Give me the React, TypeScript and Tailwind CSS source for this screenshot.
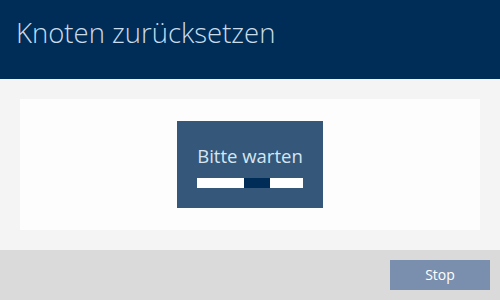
export default function App() {
  return (
    <div className="w-[500px] h-[300px] flex flex-col bg-[#f4f4f4]" style={{ fontFamily: '"Open Sans", "Noto Sans", sans-serif' }}>
      <div className="h-[79px] bg-[#002d57] px-4 pt-[13px]">
        <h1 className="text-[27.5px] font-light text-[#c9dcec] leading-[40px]">Knoten zurücksetzen</h1>
      </div>
      <div className="flex-1 px-5 pt-5 pb-5">
        <div className="h-[131px] bg-[#fdfdfd] flex justify-center pt-[22px]">
          <div className="w-[146px] h-[87px] bg-[#34577a] flex flex-col items-center pt-[24px]">
            <span className="text-[18.5px] leading-[22px] text-[#d6e6f2]">Bitte warten</span>
            <div className="mt-[11px] w-[106px] h-[10px] bg-white flex">
              <div className="ml-[47px] w-[26px] h-full bg-[#002d57]" />
            </div>
          </div>
        </div>
      </div>
      <div className="h-[50px] bg-[#dadada] flex justify-end items-center pr-[10px]">
        <button className="w-[100px] h-[30px] bg-[#7a8fae] text-white text-[14px] leading-[30px] pb-[2px]">Stop</button>
      </div>
    </div>
  );
}
